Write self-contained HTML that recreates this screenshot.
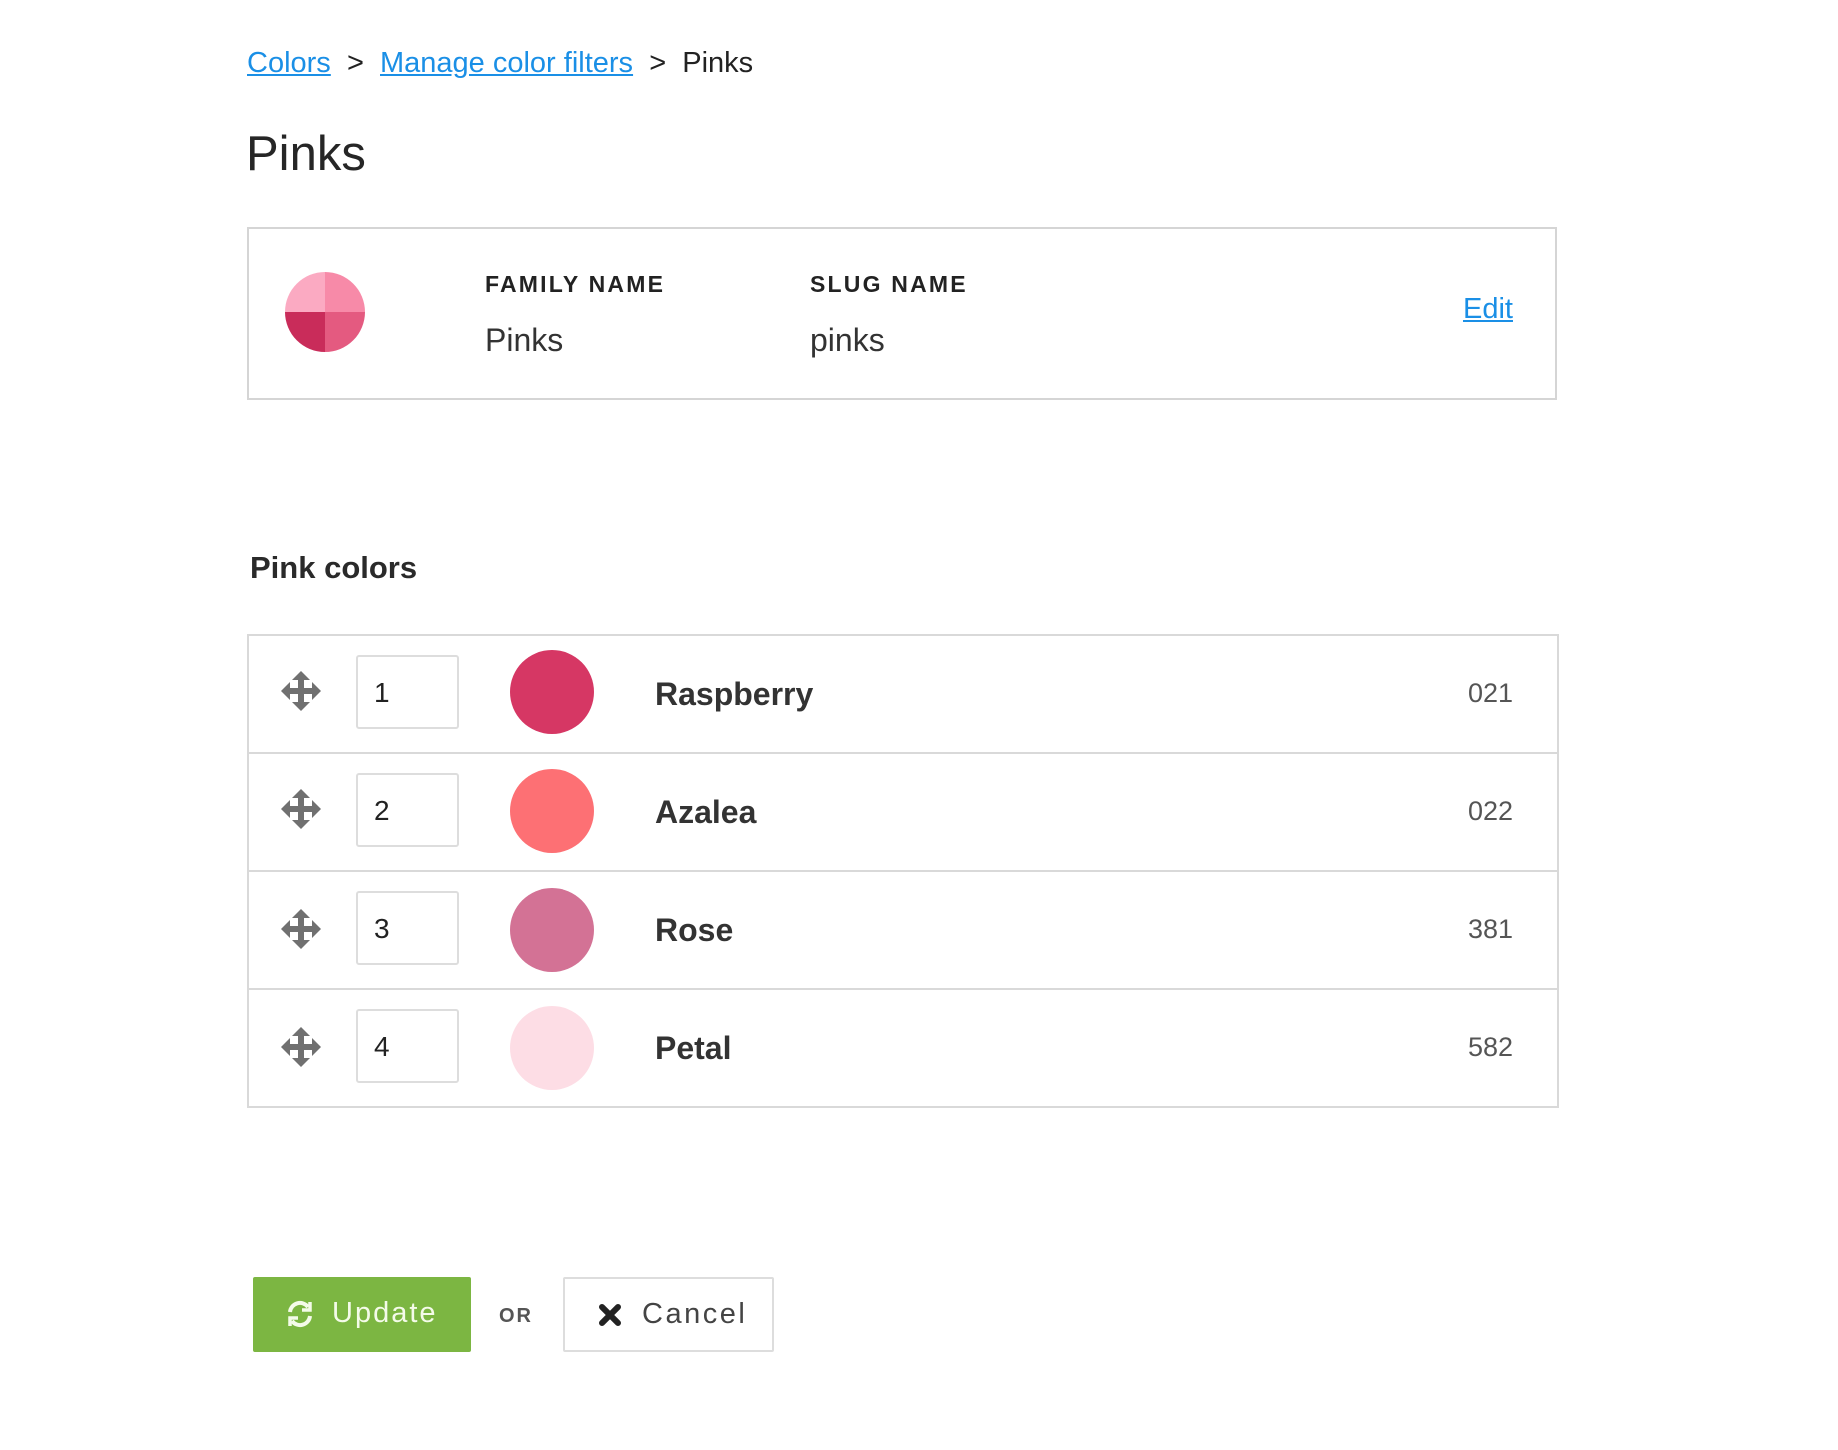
<!DOCTYPE html>
<html><head><meta charset="utf-8"><style>
*{margin:0;padding:0;box-sizing:border-box}
body{width:1838px;height:1450px;background:#fff;font-family:"Liberation Sans",Arial,sans-serif;color:#2a2a2a;position:relative;overflow:hidden}
.a{position:absolute;white-space:nowrap}
a{color:#1a8fe6;text-decoration:underline}
.lbl{font-size:23px;font-weight:bold;letter-spacing:2.2px;color:#222}
.val{font-size:32px;color:#333}
.row{position:absolute;left:0;width:100%;height:118px;border-top:2px solid #d9d9d9}
.inp{position:absolute;left:107px;width:103px;height:74px;border:2px solid #ddd;border-radius:3px;font-size:28px;padding:20px 0 0 16px;color:#222}
.sw{position:absolute;left:261px;width:84px;height:84px;border-radius:50%}
.nm{position:absolute;left:406px;font-size:32px;font-weight:bold;color:#333}
.num{position:absolute;right:44px;font-size:27px;color:#555}
.drag{position:absolute;left:31px}
</style></head><body>
<div class="a" style="left:247px;top:43px;font-size:29px;line-height:40px"><a>Colors</a>&nbsp;&nbsp;<span style="color:#222">&gt;</span>&nbsp;&nbsp;<a>Manage color filters</a>&nbsp;&nbsp;<span style="color:#222">&gt;</span>&nbsp;&nbsp;<span style="color:#222">Pinks</span></div>
<div class="a" style="left:246px;top:126px;font-size:49px;line-height:56px;color:#262626">Pinks</div>

<div class="a" style="left:247px;top:227px;width:1310px;height:173px;border:2px solid #d5d5d5">
<svg class="a" style="left:36px;top:43px" width="80" height="80" viewBox="0 0 80 80">
<path d="M40 40V0A40 40 0 0 0 0 40Z" fill="#fbaac2"/>
<path d="M40 40V0A40 40 0 0 1 80 40Z" fill="#f78aa8"/>
<path d="M40 40H0A40 40 0 0 0 40 80Z" fill="#c92c5a"/>
<path d="M40 40H80A40 40 0 0 1 40 80Z" fill="#e45a80"/>
</svg>
<div class="a lbl" style="left:236px;top:42px">FAMILY NAME</div>
<div class="a val" style="left:236px;top:93px">Pinks</div>
<div class="a lbl" style="left:561px;top:42px">SLUG NAME</div>
<div class="a val" style="left:561px;top:93px">pinks</div>
<div class="a" style="left:1214px;top:64px;font-size:29px"><a>Edit</a></div>
</div>

<div class="a" style="left:250px;top:550px;font-size:31px;font-weight:bold;color:#2a2a2a">Pink colors</div>

<div class="a" style="left:247px;top:634px;width:1312px;height:474px;border:2px solid #d9d9d9;border-top:none">
<div class="row" style="top:0"></div>
<div class="row" style="top:118px"></div>
<div class="row" style="top:236px"></div>
<div class="row" style="top:354px"></div>
</div>
<div class="a" style="left:249px;top:636px;width:1308px;height:470px">
 <div class="a" style="left:0;top:0;width:1308px;height:118px">
  <svg class="drag" style="top:34px" width="42" height="42" viewBox="0 0 42 42"><path fill="#707070" d="M21 1l9 9h-6v8h8v-6l9 9-9 9v-6h-8v8h6l-9 9-9-9h6v-8h-8v6l-9-9 9-9v6h8v-8h-6z"/></svg>
  <div class="inp" style="top:19px">1</div><div class="sw" style="top:14px;background:#d63764"></div>
  <div class="nm" style="top:40px">Raspberry</div><div class="num" style="top:42px">021</div>
 </div>
 <div class="a" style="left:0;top:118px;width:1308px;height:118px">
  <svg class="drag" style="top:34px" width="42" height="42" viewBox="0 0 42 42"><path fill="#707070" d="M21 1l9 9h-6v8h8v-6l9 9-9 9v-6h-8v8h6l-9 9-9-9h6v-8h-8v6l-9-9 9-9v6h8v-8h-6z"/></svg>
  <div class="inp" style="top:19px">2</div><div class="sw" style="top:15px;background:#fd7074"></div>
  <div class="nm" style="top:40px">Azalea</div><div class="num" style="top:42px">022</div>
 </div>
 <div class="a" style="left:0;top:236px;width:1308px;height:118px">
  <svg class="drag" style="top:36px" width="42" height="42" viewBox="0 0 42 42"><path fill="#707070" d="M21 1l9 9h-6v8h8v-6l9 9-9 9v-6h-8v8h6l-9 9-9-9h6v-8h-8v6l-9-9 9-9v6h8v-8h-6z"/></svg>
  <div class="inp" style="top:19px">3</div><div class="sw" style="top:16px;background:#d37295"></div>
  <div class="nm" style="top:40px">Rose</div><div class="num" style="top:42px">381</div>
 </div>
 <div class="a" style="left:0;top:354px;width:1308px;height:116px">
  <svg class="drag" style="top:36px" width="42" height="42" viewBox="0 0 42 42"><path fill="#707070" d="M21 1l9 9h-6v8h8v-6l9 9-9 9v-6h-8v8h6l-9 9-9-9h6v-8h-8v6l-9-9 9-9v6h8v-8h-6z"/></svg>
  <div class="inp" style="top:19px">4</div><div class="sw" style="top:16px;background:#fddde5"></div>
  <div class="nm" style="top:40px">Petal</div><div class="num" style="top:42px">582</div>
 </div>
</div>

<div class="a" style="left:253px;top:1277px;width:218px;height:75px;background:#7cb642;border-radius:2px;color:#f4fbe9;font-size:29px;letter-spacing:2px">
<svg class="a" style="left:33px;top:23px" width="28" height="28" viewBox="0 0 28 28" fill="none" stroke="#f4fbe9" stroke-width="4"><path d="M4 12A10 10 0 0 1 22 7"/><path d="M24 16A10 10 0 0 1 6 21"/><path d="M24 2v8h-8" stroke-width="3.5"/><path d="M4 26v-8h8" stroke-width="3.5"/></svg>
<span class="a" style="left:79px;top:20px">Update</span></div>
<div class="a" style="left:499px;top:1305px;font-size:20px;font-weight:bold;color:#555;letter-spacing:2px">OR</div>
<div class="a" style="left:563px;top:1277px;width:211px;height:75px;border:2px solid #ddd;border-radius:2px;color:#444;font-size:29px;letter-spacing:2.5px">
<svg class="a" style="left:33px;top:24px" width="24" height="24" viewBox="0 0 24 24"><path d="M4 4L20 20M20 4L4 20" stroke="#222" stroke-width="6" stroke-linecap="round"/></svg>
<span class="a" style="left:77px;top:19px">Cancel</span></div>
</body></html>
